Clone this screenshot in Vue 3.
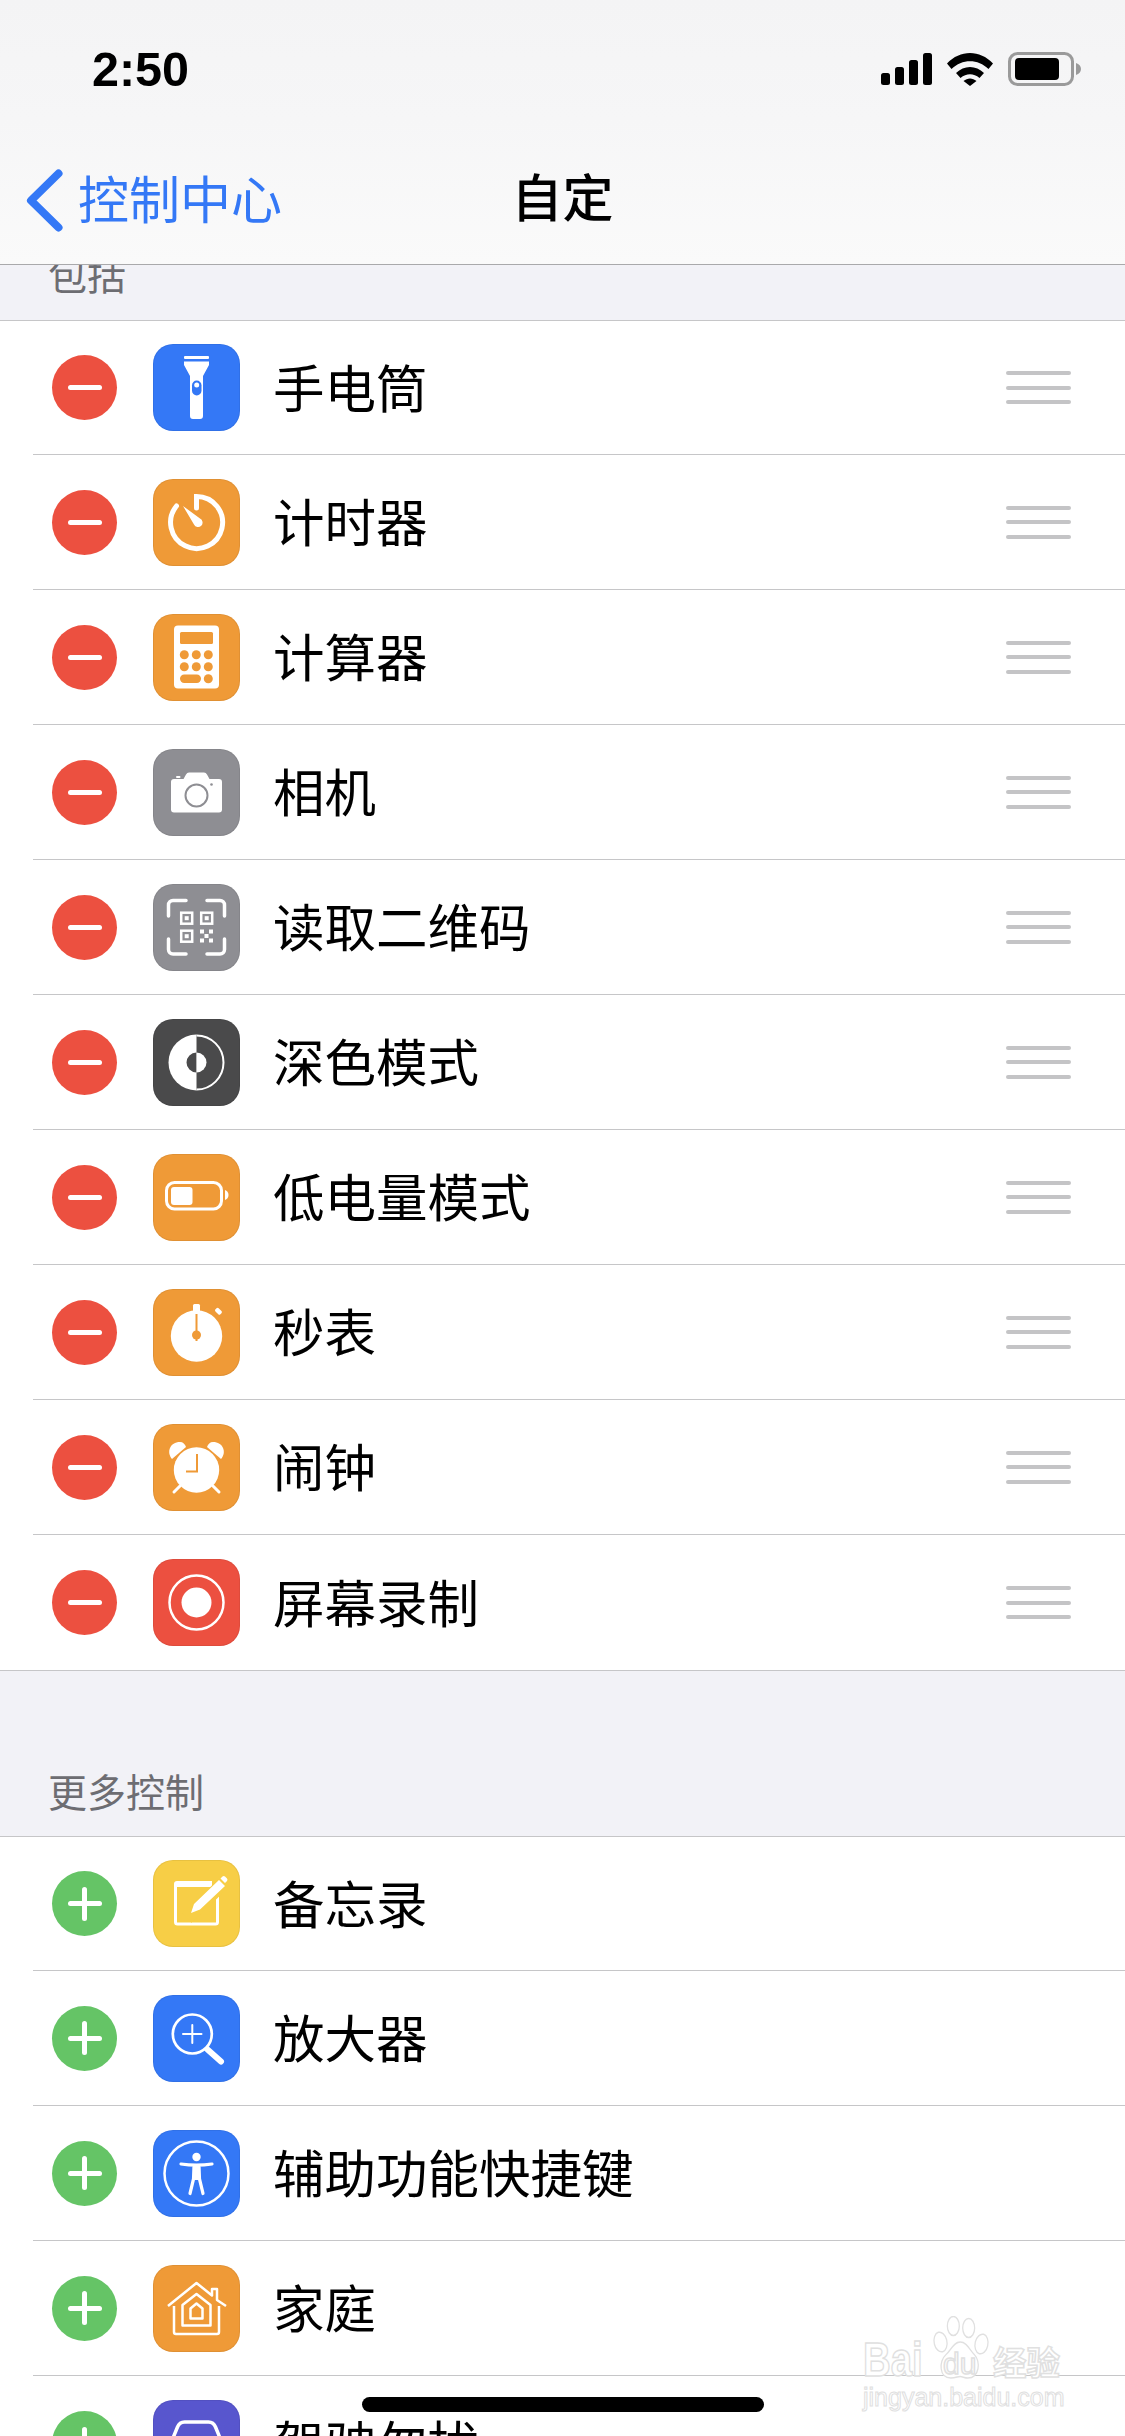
<script setup>
const included = [
  { icon: "torch", color: "#3478f6", label: "手电筒" },
  { icon: "timer", color: "#ef9a37", label: "计时器" },
  { icon: "calc", color: "#ef9a37", label: "计算器" },
  { icon: "camera", color: "#8e8e93", label: "相机" },
  { icon: "qr", color: "#8e8e93", label: "读取二维码" },
  { icon: "dark", color: "#4a4a4b", label: "深色模式" },
  { icon: "battery", color: "#ef9a37", label: "低电量模式" },
  { icon: "stopwatch", color: "#ef9a37", label: "秒表" },
  { icon: "alarm", color: "#ef9a37", label: "闹钟" },
  { icon: "record", color: "#ec5040", label: "屏幕录制" },
];
const more = [
  { icon: "notes", color: "#f7ce46", label: "备忘录" },
  { icon: "zoom", color: "#3478f6", label: "放大器" },
  { icon: "access", color: "#3478f6", label: "辅助功能快捷键" },
  { icon: "home", color: "#ef9a37", label: "家庭" },
  { icon: "car", color: "#5856ce", label: "驾驶勿扰" },
];
const groups = [
  { title: "包括", kind: "remove", items: included },
  { title: "更多控制", kind: "add", items: more },
];
</script>

<template>
  <div class="screen">
    <header class="top">
      <div class="status">
        <span class="time">2:50</span>
        <div class="status-icons">
          <svg width="51" height="32" viewBox="0 0 51 32">
            <rect x="0" y="20" width="9" height="12" rx="2.5" />
            <rect x="14" y="14" width="9" height="18" rx="2.5" />
            <rect x="28" y="7" width="9" height="25" rx="2.5" />
            <rect x="42" y="0" width="9" height="32" rx="2.5" />
          </svg>
          <svg width="46" height="33" viewBox="0 0 46 33">
            <path d="M0 10.500C13-3.500 33-3.500 46 10.500l-4.500 5.500C31 5.500 15 5.500 4.500 16z" />
            <path d="M9 20c8-8 20-8 28 0l-4.500 5c-6-5-13-5-19 0z" />
            <path d="M16.500 28c4-3.500 9-3.500 13 0L23 33z" />
          </svg>
          <svg width="74" height="34" viewBox="0 0 74 34">
            <rect x="1.500" y="1.500" width="63" height="31" rx="8" fill="none" stroke="#9a9a9a" stroke-width="3" />
            <rect x="7" y="6" width="44" height="22" rx="4" />
            <path d="M68 11c3 1 5 3 5 6s-2 5-5 6z" fill="#9a9a9a" />
          </svg>
        </div>
      </div>
      <nav class="nav">
        <div class="back">
          <svg width="37" height="63" viewBox="0 0 37 63">
            <path d="M32.500 4.500 5 31.500l27.500 27" fill="none" stroke="#3478f6" stroke-width="8" stroke-linecap="round" stroke-linejoin="round" />
          </svg>
          <span>控制中心</span>
        </div>
        <h1 class="title">自定</h1>
      </nav>
    </header>

    <main class="content">
      <section v-for="group in groups" :key="group.title" :class="['group', group.kind]">
        <div class="group-title"><span>{{ group.title }}</span></div>
        <ul class="list">
          <li v-for="item in group.items" :key="item.label" class="row">
            <div class="row-inner">
              <span class="action">
                <i class="bar"></i>
                <i v-if="group.kind === 'add'" class="bar upright"></i>
              </span>
              <span class="app-icon" :style="{ background: item.color }">
                <svg width="87" height="87" viewBox="0 0 87 87" fill="#fff">
                  <template v-if="item.icon === 'torch'">
                    <rect x="31" y="12" width="25" height="3" rx="1" />
                    <path d="M31 17.500h25v3.500L50 32v40a3 3 0 0 1-3 3h-7a3 3 0 0 1-3-3V32L31 21z" />
                    <rect x="39" y="36.500" width="9.500" height="15" rx="4.700" fill="#3478f6" />
                    <circle cx="43.700" cy="41" r="2.500" />
                  </template>
                  <template v-else-if="item.icon === 'timer'">
                    <path d="M43.500 29V17.500A26 26 0 1 1 23.500 27" fill="none" stroke="#fff" stroke-width="5" stroke-linecap="round" />
                    <path d="M30 27 47 39.500a4.500 4.500 0 1 1-6 6z" />
                  </template>
                  <template v-else-if="item.icon === 'calc'">
                    <rect x="21" y="11.500" width="45" height="63" rx="4" />
                    <g fill="#ef9a37">
                      <rect x="27" y="18" width="33" height="12" rx="1.500" />
                      <circle v-for="c in [[31.300,40.700],[43.300,40.700],[55.300,40.700],[31.300,52.800],[43.300,52.800],[55.300,52.800],[55.300,64.800]]" :key="c.join()" :cx="c[0]" :cy="c[1]" r="4.500" />
                      <rect x="27" y="60.500" width="21" height="8.500" rx="4.200" />
                    </g>
                  </template>
                  <template v-else-if="item.icon === 'camera'">
                    <path d="M21 30h9.500l2.500-4.500q1-2 3-2h15q2 0 3 2l2.500 4.500H66q3 0 3 3v27.500q0 3-3 3H21q-3 0-3-3V33q0-3 3-3z" />
                    <rect x="23" y="27" width="4.500" height="2" rx="1" />
                    <circle cx="43.500" cy="46.500" r="11" fill="none" stroke="#8e8e93" stroke-width="2" />
                    <circle cx="58.500" cy="35.500" r="1.300" fill="#8e8e93" />
                  </template>
                  <template v-else-if="item.icon === 'qr'">
                    <g fill="none" stroke="#fff" stroke-width="3.500" stroke-linecap="round">
                      <path d="M33 16.500H20a4.500 4.500 0 0 0-4.500 4.500v11" />
                      <path d="M54 16.500h13a4.500 4.500 0 0 1 4.500 4.500v11" />
                      <path d="M33 70H20a4.500 4.500 0 0 1-4.500-4.500V55" />
                      <path d="M54 70h13a4.500 4.500 0 0 0 4.500-4.500V55" />
                      <rect x="28.200" y="28.700" width="11" height="11" stroke-width="2.500" />
                      <rect x="48.200" y="28.700" width="11" height="11" stroke-width="2.500" />
                      <rect x="28.200" y="46.700" width="11" height="11" stroke-width="2.500" />
                    </g>
                    <rect x="31.700" y="32.200" width="4" height="4" />
                    <rect x="51.700" y="32.200" width="4" height="4" />
                    <rect x="31.700" y="50.200" width="4" height="4" />
                    <rect x="47" y="45.500" width="4" height="4" />
                    <rect x="56" y="45.500" width="4" height="4" />
                    <rect x="51.500" y="50" width="4" height="4" />
                    <rect x="47" y="54.500" width="4" height="4" />
                    <rect x="56" y="54.500" width="4" height="4" />
                  </template>
                  <template v-else-if="item.icon === 'dark'">
                    <path d="M43.500 15.500a28 28 0 0 0 0 56z" />
                    <path d="M43.500 16.500a27 27 0 0 1 0 54" fill="none" stroke="#fff" stroke-width="2" />
                    <path d="M43.500 33.500a10 10 0 0 0 0 20z" fill="#4a4a4b" />
                    <path d="M43.500 33.500a10 10 0 0 1 0 20z" />
                  </template>
                  <template v-else-if="item.icon === 'battery'">
                    <rect x="13.500" y="28.500" width="55" height="26.500" rx="8" fill="none" stroke="#fff" stroke-width="3" />
                    <rect x="18" y="33" width="21.500" height="18" rx="3" />
                    <path d="M72 36c2 .5 3.500 2.500 3.500 5s-1.500 4.500-3.500 5z" />
                  </template>
                  <template v-else-if="item.icon === 'stopwatch'">
                    <rect x="40" y="15" width="7" height="8" rx="1.500" />
                    <rect x="62" y="20" width="7" height="4.500" rx="1.500" transform="rotate(45 65.500 22.200)" />
                    <circle cx="43.500" cy="47" r="25.700" />
                    <rect x="42.500" y="25" width="2" height="27" fill="#ef9a37" />
                    <circle cx="43.500" cy="46" r="4.500" fill="#ef9a37" />
                  </template>
                  <template v-else-if="item.icon === 'alarm'">
                    <circle cx="43.500" cy="46" r="22.700" />
                    <path d="M19 35c-6-7-2-17 8-17 3 0 5 2 6 5z" />
                    <path d="M68 35c6-7 2-17-8-17-3 0-5 2-6 5z" />
                    <path d="m21 68 6-6M66 68l-6-6" stroke="#fff" stroke-width="3" stroke-linecap="round" />
                    <path d="M44 30v17.500H33" fill="none" stroke="#ef9a37" stroke-width="2" />
                  </template>
                  <template v-else-if="item.icon === 'record'">
                    <circle cx="43.500" cy="43.500" r="27" fill="none" stroke="#fff" stroke-width="2.500" />
                    <circle cx="43.500" cy="43.500" r="15" />
                  </template>
                  <template v-else-if="item.icon === 'notes'">
                    <path d="M22.500 24v38q0 2 2 2h38q2 0 2-2V30" fill="none" stroke="#fff" stroke-width="3" />
                    <path d="M24 21h35v6H21v-3a3 3 0 0 1 3-3z" />
                    <path d="M34 58 72 22" stroke="#f7ce46" stroke-width="13" />
                    <path d="m38 53 3-9 25-24 6 6-25 23.500zM67.500 18.500l2-2a2 2 0 0 1 2.500 0l2 2a2 2 0 0 1 0 2.500l-2 2z" />
                  </template>
                  <template v-else-if="item.icon === 'zoom'">
                    <circle cx="39.300" cy="39" r="19.500" fill="none" stroke="#fff" stroke-width="2.700" />
                    <path d="M30 39h18.500M39.300 30v18" stroke="#fff" stroke-width="2" stroke-linecap="round" />
                    <path d="m54.500 54.500 13.500 12" stroke="#fff" stroke-width="6" stroke-linecap="round" />
                  </template>
                  <template v-else-if="item.icon === 'access'">
                    <circle cx="43.500" cy="43.500" r="32" fill="none" stroke="#fff" stroke-width="2.500" />
                    <circle cx="43.500" cy="27" r="4.200" />
                    <path d="M28 34c10 1.500 21 1.500 31 0M41 36l-.5 13L37 63.500M46 36l.5 13L50 63.500" fill="none" stroke="#fff" stroke-width="3.200" stroke-linecap="round" stroke-linejoin="round" />
                    <path d="M40 36h7v14h-7z" />
                  </template>
                  <template v-else-if="item.icon === 'home'">
                    <g fill="none" stroke="#fff" stroke-linejoin="round">
                      <path d="M15 41 43.500 18 59 30.500V24h5v11l9 6M21 41v26q0 2 2 2h41q2 0 2-2V41" stroke-width="2.500" />
                      <path d="M29.500 60.500V40l14-11 14 11v20.500z" stroke-width="2.500" />
                      <path d="M37.500 53.500V43.500l6-5 6 5v10z" stroke-width="2.500" />
                    </g>
                  </template>
                  <template v-else-if="item.icon === 'car'">
                    <path d="M20 38 24.500 27q2-5 7-5h24q5 0 7 5L67 38" fill="none" stroke="#fff" stroke-width="3.500" />
                    <path d="M14 40h59v24H14z" />
                  </template>
                </svg>
              </span>
              <span class="label">{{ item.label }}</span>
              <span v-if="group.kind === 'remove'" class="grip"><i></i><i></i><i></i></span>
            </div>
          </li>
        </ul>
      </section>
    </main>

    <div class="watermark">
      <svg class="paw" width="58" height="64" viewBox="0 0 68 64" preserveAspectRatio="none" fill="#fff" stroke="#e0e0e0" stroke-width="1.500">
        <ellipse cx="10" cy="26" rx="7.500" ry="10" transform="rotate(-15 10 26)" />
        <ellipse cx="25" cy="10" rx="7" ry="9.500" />
        <ellipse cx="43" cy="12" rx="7" ry="9.500" />
        <ellipse cx="58" cy="28" rx="7.500" ry="10" transform="rotate(15 58 28)" />
        <path d="M33 26c8 0 11 8 17 13 7 6 6 23-8 23-4 0-6-1.500-9-1.500S28 62 22 62C8 62 8 45 16 39c6-4 9-13 17-13z" />
      </svg>
      <div class="mark-top">
        <span class="mark-bai">Bai</span>
        <span class="mark-du">du</span>
        <span class="mark-cn">经验</span>
      </div>
      <div class="mark-url">jingyan.baidu.com</div>
    </div>

    <div class="home-bar"></div>
  </div>
</template>

<style scoped>
.screen {
  position: relative;
  width: 1125px;
  height: 2436px;
  overflow: hidden;
  background: #f2f2f7;
  font-family: "Noto Sans CJK SC", "Liberation Sans", sans-serif;
  color: #000;
}
.top {
  position: relative;
  z-index: 2;
  height: 265px;
  box-sizing: border-box;
  background: linear-gradient(#f4f4f5, #f6f6f7 45%, #fafafa);
  border-bottom: 1px solid #a9a9ab;
}
.status {
  height: 132px;
  box-sizing: border-box;
  padding: 48px 43px 0 92px;
  display: flex;
  justify-content: space-between;
  align-items: flex-start;
}
.time {
  font-family: "Liberation Sans", sans-serif;
  font-weight: 700;
  font-size: 48.5px;
  line-height: 42px;
}
.status-icons {
  display: flex;
  align-items: center;
  gap: 15px;
  padding-top: 4px;
}
.nav {
  position: relative;
  height: 132px;
  display: flex;
  align-items: center;
  justify-content: center;
}
.back {
  position: absolute;
  left: 26px;
  top: 34px;
  display: flex;
  align-items: center;
  gap: 15px;
  color: #3478f6;
  font-size: 51px;
  line-height: 63px;
}
.back span {
  padding-bottom: 5px;
}
.title {
  margin: 0;
  font-size: 51px;
  line-height: 63px;
  font-weight: 500;
  position: relative;
  top: -3px;
}
.group-title {
  height: 165px;
  box-sizing: border-box;
  padding: 0 48px 22px;
  display: flex;
  align-items: flex-end;
  font-size: 39px;
  line-height: 48px;
  color: #6d6d72;
  overflow: hidden;
}
.remove .group-title {
  height: 55px;
  padding-bottom: 23px;
}
.list {
  margin: 0;
  padding: 0;
  list-style: none;
  background: #fff;
  border-top: 1px solid #c6c6c8;
  border-bottom: 1px solid #c6c6c8;
}
.row {
  padding-left: 33px;
}
.row-inner {
  height: 135px;
  box-sizing: border-box;
  padding: 0 54px 0 19px;
  display: flex;
  align-items: center;
  border-bottom: 1px solid #c6c6c8;
}
.row:first-child .row-inner {
  height: 134px;
}
.row:last-child .row-inner {
  border-bottom: 0;
}
.action {
  position: relative;
  flex: none;
  width: 65px;
  height: 65px;
  border-radius: 50%;
  display: flex;
  align-items: center;
  justify-content: center;
}
.remove .action {
  background: #ec5040;
}
.add .action {
  background: #65c466;
}
.bar {
  display: block;
  width: 34px;
  height: 5px;
  border-radius: 3px;
  background: #fff;
}
.bar.upright {
  position: absolute;
  width: 5px;
  height: 34px;
}
.app-icon {
  flex: none;
  width: 87px;
  height: 87px;
  margin-left: 36px;
  border-radius: 20px;
  overflow: hidden;
  box-shadow: inset 0 0 0 1px rgba(0, 0, 0, 0.06);
}
.app-icon svg {
  display: block;
}
.label {
  flex: 1;
  margin-left: 33px;
  padding-bottom: 4px;
  font-size: 51.5px;
  line-height: 60px;
  white-space: nowrap;
}
.grip {
  flex: none;
  width: 65px;
  display: flex;
  flex-direction: column;
  gap: 10.5px;
}
.grip i {
  display: block;
  height: 4px;
  border-radius: 2px;
  background: #c4c4c6;
}
.watermark {
  position: absolute;
  left: 863px;
  top: 2315px;
  width: 205px;
  height: 100px;
  color: #fff;
}
.paw {
  position: absolute;
  left: 69px;
  top: 1px;
}
.mark-top {
  position: absolute;
  left: 0;
  top: 26px;
  width: 205px;
  height: 44px;
  font-family: "Liberation Sans", sans-serif;
  font-weight: 700;
  -webkit-text-stroke: 1.5px #e0e0e0;
}
.mark-bai {
  position: absolute;
  left: 0;
  top: -3px;
  font-size: 48px;
  line-height: 44px;
  transform: scaleX(0.8);
  transform-origin: left center;
}
.mark-du {
  position: absolute;
  left: 80px;
  top: 8px;
  font-size: 30px;
  line-height: 30px;
  font-weight: 400;
}
.mark-cn {
  position: absolute;
  left: 130px;
  top: 0;
  font-family: "Noto Sans CJK SC", sans-serif;
  font-size: 33.5px;
  line-height: 40px;
}
.mark-url {
  position: absolute;
  left: 0;
  top: 65px;
  font-family: "Liberation Sans", sans-serif;
  font-size: 25px;
  line-height: 34px;
  -webkit-text-stroke: 1px #e0e0e0;
}
.home-bar {
  position: absolute;
  left: 362px;
  top: 2397px;
  width: 402px;
  height: 15px;
  border-radius: 8px;
  background: #000;
}
</style>

<style>
html,
body {
  margin: 0;
  background: #fff;
}
</style>
